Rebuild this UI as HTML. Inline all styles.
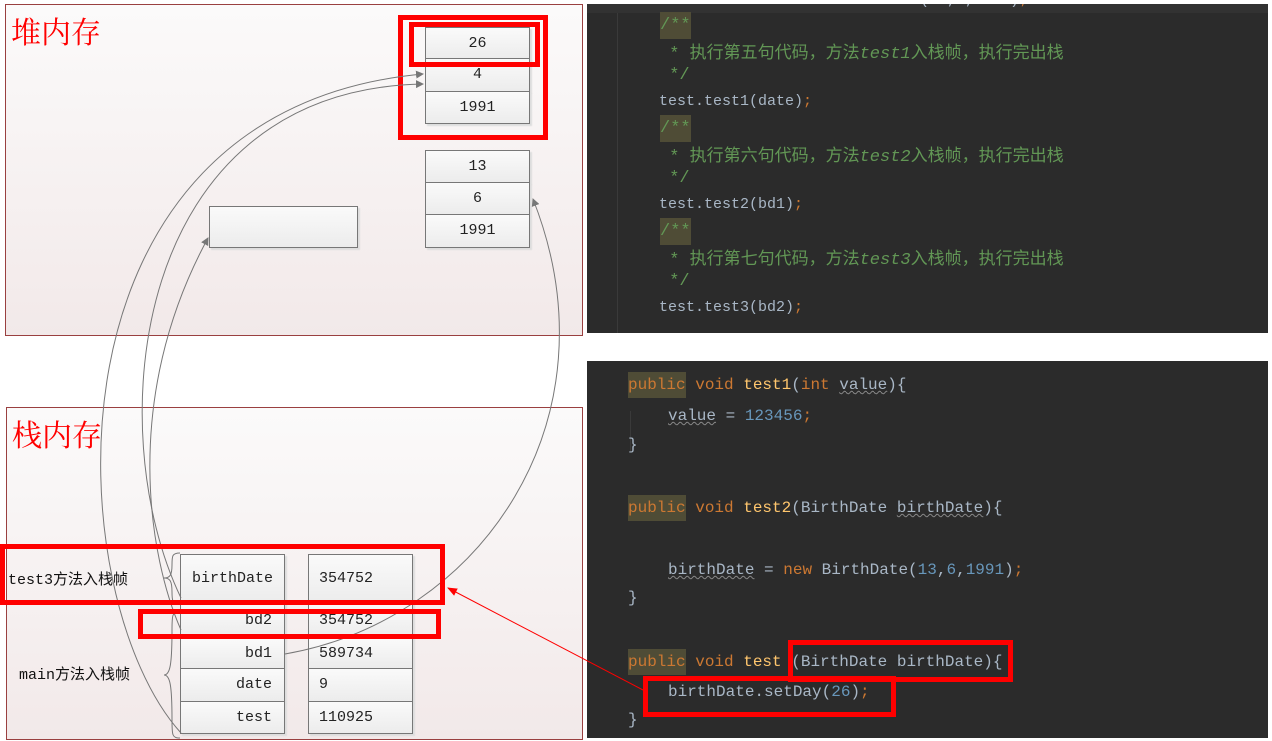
<!DOCTYPE html>
<html><head><meta charset="utf-8"><style>
body{margin:0;width:1272px;height:741px;background:#fff;position:relative;overflow:hidden;font-family:"Liberation Mono","Noto Sans CJK SC",monospace}
.abs{position:absolute}
.panel{position:absolute;border:1px solid #9a4040;background:linear-gradient(#fbfafa,#f2e9e9)}
.cell{position:absolute;border:1px solid #777;background:linear-gradient(#fafafa,#ececec);box-sizing:border-box;font-size:15px;color:#222;text-align:center;box-shadow:2px 2px 1px #ddd}
.code{position:absolute;background:#2b2b2b;color:#a9b7c6;white-space:pre;overflow:hidden}
.code div{position:absolute}
.s1{font-size:15px}
.s2{font-size:16px}
.cm{font-size:17px;color:#629755}
.k{color:#cc7832}.f{color:#ffc66d}.n{color:#6897bb}.c{color:#629755}.hl{background:#4f4c36;padding:4px 0}
.red{position:absolute;border:5px solid #f00;box-sizing:border-box}
.w{text-decoration:underline wavy #888;text-decoration-thickness:1px}
.lbl{position:absolute;font-size:15px;color:#111;font-family:"Liberation Mono","Noto Sans CJK SC",monospace}
</style></head><body>
<div class="panel" style="left:5px;top:4px;width:576px;height:330px"></div>
<div class="abs" style="left:11px;top:8px;font-size:30px;color:#f00;font-family:'Noto Serif CJK SC',serif">堆内存</div>
<div class="cell" style="left:425px;top:27px;width:105px;height:33px;line-height:31px">26</div>
<div class="cell" style="left:425px;top:58px;width:105px;height:34px;line-height:32px">4</div>
<div class="cell" style="left:425px;top:91px;width:105px;height:33px;line-height:31px">1991</div>
<div class="cell" style="left:425px;top:150px;width:105px;height:33px;line-height:31px">13</div>
<div class="cell" style="left:425px;top:182px;width:105px;height:33px;line-height:31px">6</div>
<div class="cell" style="left:425px;top:214px;width:105px;height:34px;line-height:32px">1991</div>
<div class="cell" style="left:209px;top:206px;width:149px;height:42px"></div>
<div class="red" style="left:398px;top:15px;width:150px;height:125px"></div>
<div class="red" style="left:409px;top:22px;width:131px;height:45px"></div>

<div class="panel" style="left:6px;top:407px;width:575px;height:331px"></div>
<div class="abs" style="left:12px;top:411px;font-size:30px;color:#f00;font-family:'Noto Serif CJK SC',serif">栈内存</div>
<div class="cell" style="left:180px;top:554px;width:105px;height:50px;line-height:48px;text-align:left;padding-left:11px">birthDate</div>
<div class="cell" style="left:308px;top:554px;width:105px;height:50px;line-height:48px;text-align:left;padding-left:10px">354752</div>
<div class="cell" style="left:180px;top:603px;width:105px;height:36px;line-height:34px;text-align:right;padding-right:12px">bd2</div>
<div class="cell" style="left:308px;top:603px;width:105px;height:36px;line-height:34px;text-align:left;padding-left:10px">354752</div>
<div class="cell" style="left:180px;top:638px;width:105px;height:31px;line-height:29px;text-align:right;padding-right:12px">bd1</div>
<div class="cell" style="left:308px;top:638px;width:105px;height:31px;line-height:29px;text-align:left;padding-left:10px">589734</div>
<div class="cell" style="left:180px;top:668px;width:105px;height:34px;line-height:32px;text-align:right;padding-right:12px">date</div>
<div class="cell" style="left:308px;top:668px;width:105px;height:34px;line-height:32px;text-align:left;padding-left:10px">9</div>
<div class="cell" style="left:180px;top:701px;width:105px;height:33px;line-height:31px;text-align:right;padding-right:12px">test</div>
<div class="cell" style="left:308px;top:701px;width:105px;height:33px;line-height:31px;text-align:left;padding-left:10px">110925</div>
<div class="lbl" style="left:8px;top:568px">test3方法入栈帧</div>
<div class="lbl" style="left:19px;top:663px">main方法入栈帧</div>

<svg class="abs" style="left:0;top:0" width="1272" height="741">
<defs><marker id="a" markerWidth="8" markerHeight="8" refX="7" refY="4" orient="auto"><path d="M0,0L8,4L0,8z" fill="#777"/></marker></defs>
<g fill="none" stroke="#777" stroke-width="1">
<path d="M181,733 C60,600 30,110 423,74" marker-end="url(#a)"/>
<path d="M181,598 C100,430 130,90 423,84" marker-end="url(#a)"/>
<path d="M181,630 C150,560 120,400 208,238" marker-end="url(#a)"/>
<path d="M285,654 C480,620 620,420 533,199" marker-end="url(#a)"/>
<path d="M180,553 C172,553 172,556 172,565 C172,575 170,578 164,578 C170,578 172,581 172,592 C172,600 172,604 180,604"/>
<path d="M180,612 C172,612 172,615 172,630 C172,665 170,675 164,675 C170,675 172,685 172,720 C172,735 172,738 180,738"/>
</g>
</svg>
<div class="red" style="left:0;top:544px;width:445px;height:61px"></div>
<div class="red" style="left:138px;top:609px;width:303px;height:30px"></div>

<div class="code" style="left:587px;top:4px;width:681px;height:329px">
<div style="left:30px;top:0;width:1px;height:329px;background:#3a3a3a"></div>
<div style="left:0;top:0;width:681px;height:9px;background:#323232"></div>
<div class="s1" style="left:72px;top:-12px">BirthDate bd2 = <span class="k">new</span> BirthDate(<span class="n">26</span>,<span class="n">4</span>,<span class="n">1991</span>)<span class="k">;</span></div>
<div class="cm" style="left:73px;top:12px"><span class="hl">/**</span></div>
<div class="cm" style="left:72px;top:34px"> * 执行第五句代码，方法<i>test1</i>入栈帧，执行完出栈</div>
<div class="cm" style="left:72px;top:62px"> */</div>
<div class="s1" style="left:72px;top:89px">test.test1(date)<span class="k">;</span></div>
<div class="cm" style="left:73px;top:115px"><span class="hl">/**</span></div>
<div class="cm" style="left:72px;top:137px"> * 执行第六句代码，方法<i>test2</i>入栈帧，执行完出栈</div>
<div class="cm" style="left:72px;top:165px"> */</div>
<div class="s1" style="left:72px;top:192px">test.test2(bd1)<span class="k">;</span></div>
<div class="cm" style="left:73px;top:218px"><span class="hl">/**</span></div>
<div class="cm" style="left:72px;top:240px"> * 执行第七句代码，方法<i>test3</i>入栈帧，执行完出栈</div>
<div class="cm" style="left:72px;top:268px"> */</div>
<div class="s1" style="left:72px;top:295px">test.test3(bd2)<span class="k">;</span></div>
</div>

<div class="code" style="left:587px;top:361px;width:681px;height:377px">
<div style="left:43px;top:50px;width:1px;height:40px;background:#3a3a3a"></div>
<div class="s2" style="left:41px;top:15px"><span class="k hl">public</span><span class="k"> void </span><span class="f">test1</span>(<span class="k">int </span><span class="w">value</span>){</div>
<div class="s2" style="left:81px;top:46px"><span class="w">value</span> = <span class="n">123456</span><span class="k">;</span></div>
<div class="s2" style="left:41px;top:75px">}</div>
<div class="s2" style="left:41px;top:138px"><span class="k hl">public</span><span class="k"> void </span><span class="f">test2</span>(BirthDate <span class="w">birthDate</span>){</div>
<div class="s2" style="left:81px;top:200px"><span class="w">birthDate</span> = <span class="k">new </span>BirthDate(<span class="n">13</span>,<span class="n">6</span>,<span class="n">1991</span>)<span class="k">;</span></div>
<div class="s2" style="left:41px;top:228px">}</div>
<div class="s2" style="left:41px;top:292px"><span class="k hl">public</span><span class="k"> void </span><span class="f">test </span>(BirthDate birthDate){</div>
<div class="s2" style="left:81px;top:322px">birthDate.setDay(<span class="n">26</span>)<span class="k">;</span></div>
<div class="s2" style="left:41px;top:350px">}</div>
</div>
<div class="red" style="left:788px;top:640px;width:225px;height:42px"></div>
<div class="red" style="left:643px;top:676px;width:253px;height:41px"></div>
<svg class="abs" style="left:0;top:0" width="1272" height="741">
<defs><marker id="r" markerWidth="10" markerHeight="10" refX="9" refY="5" orient="auto"><path d="M0,1L10,5L0,9z" fill="#f00"/></marker></defs>
<line x1="643" y1="690" x2="448" y2="588" stroke="#f00" stroke-width="1" marker-end="url(#r)"/>
</svg>
</body></html>
